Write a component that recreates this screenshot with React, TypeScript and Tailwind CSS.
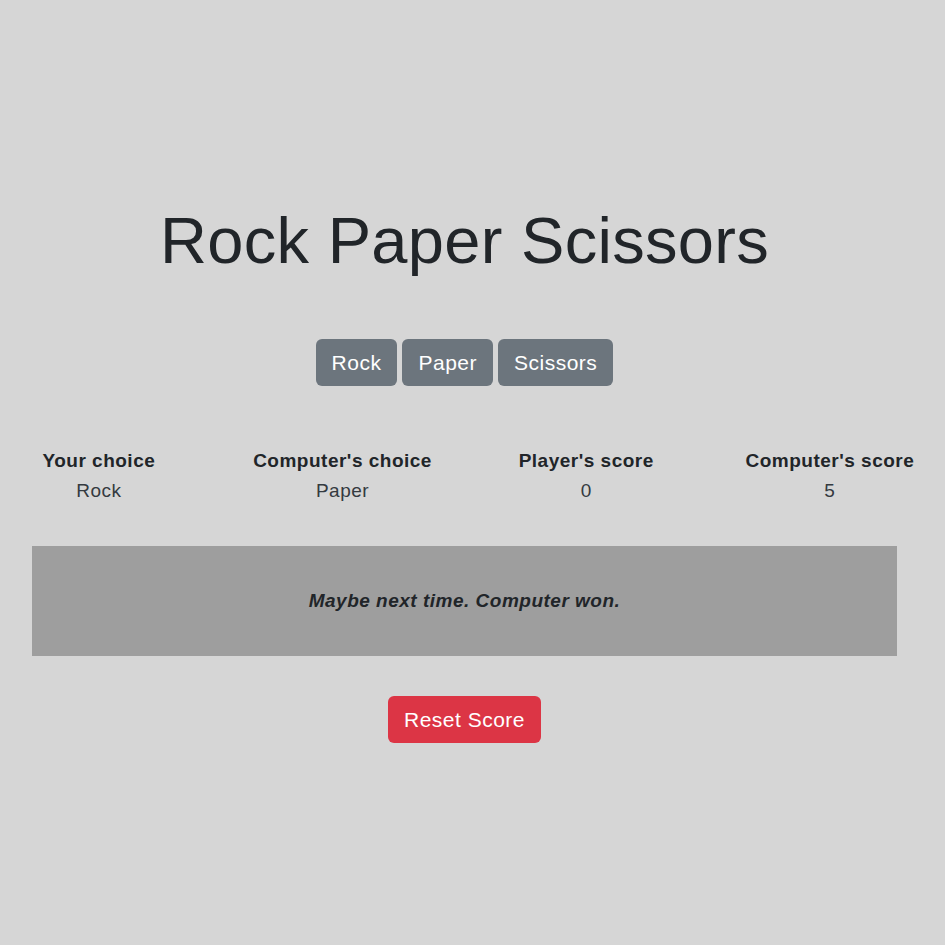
import React from "react";

export default function App() {
  const stats = [
    { label: "Your choice", value: "Rock" },
    { label: "Computer's choice", value: "Paper" },
    { label: "Player's score", value: "0" },
    { label: "Computer's score", value: "5" },
  ];
  return (
    <div
      className="min-h-screen w-full bg-[#d6d6d6] text-[#212529]"
      style={{ fontFamily: '"Liberation Sans", Arial, sans-serif' }}
    >
      <div className="w-[929px] flex flex-col items-center pt-[208px]">
        <h1 className="text-[65px] leading-[66px] font-normal tracking-[0.3px]">Rock Paper Scissors</h1>
        <div className="mt-[65px] flex gap-[5px]">
          {["Rock", "Paper", "Scissors"].map((b) => (
            <button
              key={b}
              className="h-[47px] px-[16px] rounded-[6px] bg-[#6c757d] text-white text-[21px] tracking-[0.5px]"
            >
              {b}
            </button>
          ))}
        </div>
        <div className="mt-[60px] self-start ml-[-23px] flex">
          {stats.map((s) => (
            <div key={s.label} className="w-[243.7px] flex flex-col items-center">
              <div className="text-[19px] leading-[30px] font-bold tracking-[0.5px]">{s.label}</div>
              <div className="text-[19px] leading-[30px] text-[#343a40] tracking-[0.5px]">{s.value}</div>
            </div>
          ))}
        </div>
        <div className="mt-[40px] w-[865px] h-[110px] bg-[#9e9e9e] flex items-center justify-center">
          <p className="text-[19px] font-bold italic tracking-[0.5px]">Maybe next time. Computer won.</p>
        </div>
        <button className="mt-[40px] h-[47px] px-[16px] rounded-[6px] bg-[#dc3545] text-white text-[21px] tracking-[0.5px]">
          Reset Score
        </button>
      </div>
    </div>
  );
}
